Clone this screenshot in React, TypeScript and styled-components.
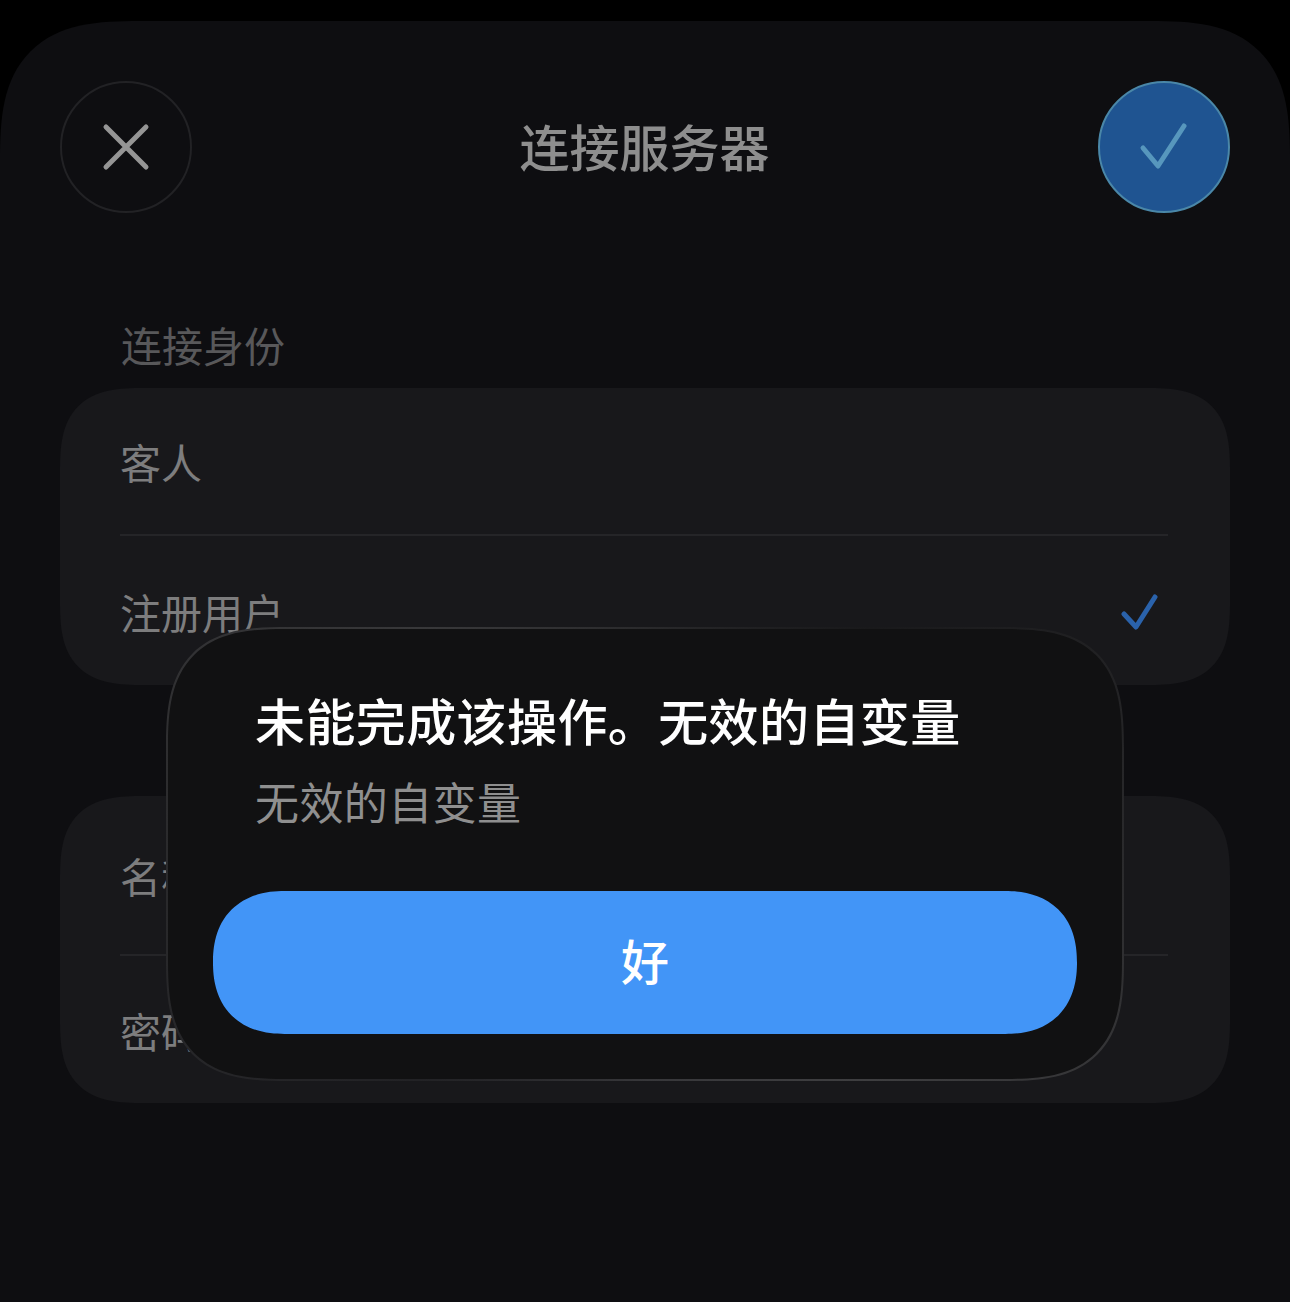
import { createGlobalStyle, styled } from "styled-components";

const GlobalStyle = createGlobalStyle`
  html, body {
    margin: 0;
    background: #000;
    font-family: "Noto Sans CJK SC", "Noto Sans", sans-serif;
  }
`;

const Page = styled.div`
  position: relative;
  width: 1290px;
  height: 1302px;
  padding-top: 21px;
  box-sizing: border-box;
  overflow: hidden;
`;

const Sheet = styled.main`
  height: 1281px;
  box-sizing: border-box;
  padding: 60px 60px 0;
  background: #0e0e11;
  border-radius: 140px 140px 0 0;
  corner-shape: superellipse(1.5);
`;

const Header = styled.header`
  display: flex;
  align-items: center;
  justify-content: space-between;
`;

const Title = styled.h1`
  margin: 0;
  padding: 0 1px 4px 0;
  font-size: 50px;
  line-height: 127px;
  font-weight: 500;
  color: #8e8e8e;
`;

const RoundButton = styled.button<{ $primary?: boolean }>`
  display: flex;
  align-items: center;
  justify-content: center;
  width: 132px;
  height: 132px;
  padding: 0;
  border-radius: 50%;
  box-sizing: border-box;
  border: 2px solid ${(p) => (p.$primary ? "#4a87a8" : "#222225")};
  background: ${(p) => (p.$primary ? "#1f5491" : "transparent")};
`;

const SectionLabel = styled.div`
  height: 175px;
  box-sizing: border-box;
  padding: 101px 0 0 61px;
  font-size: 41px;
  line-height: 60px;
  color: #58585a;
`;

const Card = styled.section<{ $gap?: number }>`
  margin-top: ${(p) => p.$gap ?? 0}px;
  padding: 0 62px 0 60px;
  background: #18181b;
  border-radius: 84px;
  corner-shape: superellipse(1.5);
`;

const Row = styled.div<{ $height: number; $divider?: boolean }>`
  display: flex;
  align-items: center;
  justify-content: space-between;
  height: ${(p) => p.$height}px;
  box-sizing: border-box;
  font-size: 41px;
  color: #7d7d7e;
  border-bottom: ${(p) => (p.$divider ? "2px solid #252528" : "none")};
`;

const RowCheck = styled.svg`
  width: 40px;
  height: 40px;
  margin: 6px 10px 0 0;
`;

const Dialog = styled.div`
  position: absolute;
  left: 166px;
  top: 627px;
  width: 958px;
  height: 454px;
  box-sizing: border-box;
  padding: 58px 45px 46px;
  border: 2px solid transparent;
  border-radius: 122px;
  corner-shape: superellipse(1.5);
  background:
    linear-gradient(#111112, #111112) padding-box,
    conic-gradient(#2a2a2c, #19191b 45deg, #2a2a2c 90deg, #3e3e40 135deg, #37373a 180deg, #222225 225deg, #2a2a2c 270deg, #38383a 315deg, #2a2a2c) border-box;
`;

const DialogTitle = styled.h2`
  margin: 0;
  padding-left: 42px;
  font-size: 50px;
  line-height: 64px;
  font-weight: 500;
  letter-spacing: 0.4px;
  color: #fff;
`;

const DialogText = styled.p`
  margin: 18px 0 0;
  padding-left: 42px;
  font-size: 44px;
  line-height: 64px;
  letter-spacing: 0.4px;
  color: #8f8f8f;
`;

const ConfirmButton = styled.button`
  display: block;
  width: 864px;
  height: 143px;
  margin-top: 58px;
  padding: 0 0 8px;
  border: none;
  border-radius: 72px;
  corner-shape: superellipse(1.2);
  background: #4295f7;
  color: #fff;
  font-family: inherit;
  font-size: 48px;
  font-weight: 500;
`;

const App = () => (
  <Page>
    <GlobalStyle />
    <Sheet>
      <Header>
        <RoundButton aria-label="关闭">
          <svg width="50" height="50" viewBox="0 0 50 50" fill="none" stroke="#959595" strokeWidth="5" strokeLinecap="round">
            <path d="M5 5 45 45M45 5 5 45" />
          </svg>
        </RoundButton>
        <Title>连接服务器</Title>
        <RoundButton $primary aria-label="确认">
          <svg width="50" height="50" viewBox="0 0 50 50" fill="none" stroke="#5797bd" strokeWidth="5" strokeLinecap="round" strokeLinejoin="round">
            <path d="M4 26 19 44 45 4" />
          </svg>
        </RoundButton>
      </Header>
      <SectionLabel>连接身份</SectionLabel>
      <Card>
        <Row $height={148} $divider>客人</Row>
        <Row $height={149}>
          注册用户
          <RowCheck viewBox="0 0 40 40" fill="none" stroke="#2a62ab" strokeWidth="5" strokeLinecap="round" strokeLinejoin="round">
            <path d="M6 20 18 33 37 3" />
          </RowCheck>
        </Row>
      </Card>
      <Card $gap={111}>
        <Row $height={160} $divider>名称</Row>
        <Row $height={147}>密码</Row>
      </Card>
    </Sheet>
    <Dialog>
      <DialogTitle>未能完成该操作。无效的自变量</DialogTitle>
      <DialogText>无效的自变量</DialogText>
      <ConfirmButton>好</ConfirmButton>
    </Dialog>
  </Page>
);

export default App;
